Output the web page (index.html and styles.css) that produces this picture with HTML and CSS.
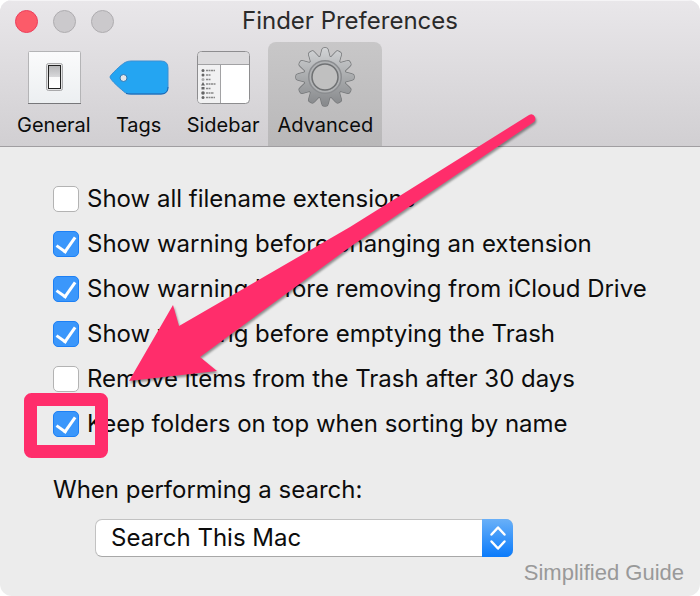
FILE: index.html
```
<!DOCTYPE html>
<html lang="en">
<head>
  <meta charset="UTF-8">
  <meta name="viewport" content="width=device-width, initial-scale=1">
  <title>Finder Preferences</title>
  <link rel="stylesheet" href="styles.css">
</head>
<body>
<div class="window">
  <header class="toolbar">
    <div class="titlebar">
      <div class="lights">
        <span class="light close"></span>
        <span class="light"></span>
        <span class="light"></span>
      </div>
      <h1 class="title">Finder Preferences</h1>
    </div>
    <nav class="tabs">
      <button type="button" class="tab">
        <svg class="icon" width="60" height="60" viewBox="0 0 60 60">
          <defs>
            <linearGradient id="plate" x1="0" y1="0" x2="0" y2="1">
              <stop offset="0" stop-color="#fbfbfc"/>
              <stop offset="1" stop-color="#eceff1"/>
            </linearGradient>
            <linearGradient id="lever" x1="0" y1="0" x2="0" y2="1">
              <stop offset="0" stop-color="#b5b5b7"/>
              <stop offset="0.5" stop-color="#d8d8da"/>
              <stop offset="0.52" stop-color="#fafafa"/>
              <stop offset="1" stop-color="#ffffff"/>
            </linearGradient>
          </defs>
          <rect x="4.500" y="4.500" width="52" height="52" rx="1" fill="url(#plate)" stroke="#b4b4b6"/>
          <path d="M4 56.500h53" stroke="#77777a"/>
          <rect x="22.500" y="16.500" width="16" height="27" rx="2" fill="#e4e4e5" stroke="#a9a9ab"/>
          <rect x="24.500" y="18.500" width="12" height="23" fill="url(#lever)" stroke="#222"/>
        </svg>
        <span class="tab-label">General</span>
      </button>
      <button type="button" class="tab">
        <svg class="icon" width="60" height="60" viewBox="0 0 60 60">
          <path d="M1 30C1 28 13 17 16 15.500Q18.500 14 22 14H52Q59 14 59 21V40Q59 47 52 47H22Q18.500 47 16 45.500C13 43 1 33 1 30Z" fill="#24a5f2" stroke="#3b8fd3"/>
          <path d="M17 46.500Q19 47 22 47H52Q59 47 59 40" fill="none" stroke="#1767b5"/>
          <circle cx="14.500" cy="31" r="3.500" fill="#e2e5e9" stroke="#2c78b5"/>
        </svg>
        <span class="tab-label">Tags</span>
      </button>
      <button type="button" class="tab">
        <svg class="icon" width="60" height="60" viewBox="0 0 60 60">
          <rect x="4.500" y="4.500" width="52" height="52" rx="4" fill="#fff" stroke="#8d8d8f"/>
          <path d="M5 17.500V8.500Q5 5 8.500 5H52.500Q56 5 56 8.500V17.500Z" fill="#dcdbdd"/>
          <path d="M5 18H27V56H8.500Q5 56 5 52.500Z" fill="#f1f1f2"/>
          <path d="M5 17.500H56M27.500 18V56" stroke="#a2a2a4"/>
          <g fill="#666">
            <circle cx="10" cy="23.500" r="1.500"/><circle cx="10" cy="28" r="1.500"/>
            <circle cx="10" cy="32.500" r="1.500" fill="#aaa"/><path d="M8 38.500l2-3.500 2 3.500z"/>
            <rect x="8.500" y="40" width="3" height="2.500"/><circle cx="10" cy="46" r="1.800"/>
            <circle cx="10" cy="50.500" r="1.500"/>
          </g>
          <path d="M13 23.500h9M13 28h5M13 32.500h5M13 37h10M13 41.500h5M13 46h8M13 50.500h9" stroke="#888" stroke-width="1.500" stroke-dasharray="2 0.500"/>
        </svg>
        <span class="tab-label">Sidebar</span>
      </button>
      <button type="button" class="tab active">
        <svg class="icon" width="60" height="60" viewBox="0 0 60 60">
          <defs>
            <linearGradient id="metal" x1="0" y1="0" x2="0" y2="1">
              <stop offset="0" stop-color="#d3d5d7"/>
              <stop offset="0.5" stop-color="#a9abad"/>
              <stop offset="1" stop-color="#85878a"/>
            </linearGradient>
            <path id="tooth" d="M-5 -19L-3 -27Q-2.700 -29 -1 -29H1Q2.700 -29 3 -27L5 -19Z"/>
            <g id="gear" transform="translate(30 30)">
              <circle r="21"/>
              <use href="#tooth"/>
              <use href="#tooth" transform="rotate(30)"/>
              <use href="#tooth" transform="rotate(60)"/>
              <use href="#tooth" transform="rotate(90)"/>
              <use href="#tooth" transform="rotate(120)"/>
              <use href="#tooth" transform="rotate(150)"/>
              <use href="#tooth" transform="rotate(180)"/>
              <use href="#tooth" transform="rotate(210)"/>
              <use href="#tooth" transform="rotate(240)"/>
              <use href="#tooth" transform="rotate(270)"/>
              <use href="#tooth" transform="rotate(300)"/>
              <use href="#tooth" transform="rotate(330)"/>
            </g>
            <mask id="gear-mask"><use href="#gear" fill="#fff"/></mask>
          </defs>
          <use href="#gear" fill="#77797b" stroke="#77797b" stroke-width="1.500"/>
          <rect width="60" height="60" fill="url(#metal)" mask="url(#gear-mask)"/>
          <circle cx="30" cy="30" r="16" fill="none" stroke="#8b8d90" stroke-width="2"/>
          <circle cx="30" cy="30" r="14.500" fill="none" stroke="#b0b2b4" stroke-width="2"/>
          <circle cx="30" cy="30" r="13" fill="#c0c0c0" stroke="#6f7173" stroke-width="1.500"/>
        </svg>
        <span class="tab-label">Advanced</span>
      </button>
    </nav>
  </header>

  <main class="content">
    <div class="options">
      <label class="option"><input type="checkbox" class="check"><span>Show all filename extensions</span></label>
      <label class="option"><input type="checkbox" class="check" checked><span>Show warning before changing an extension</span></label>
      <label class="option"><input type="checkbox" class="check" checked><span>Show warning before removing from iCloud Drive</span></label>
      <label class="option"><input type="checkbox" class="check" checked><span>Show warning before emptying the Trash</span></label>
      <label class="option"><input type="checkbox" class="check"><span>Remove items from the Trash after 30 days</span></label>
      <label class="option"><input type="checkbox" class="check" checked><span>Keep folders on top when sorting by name</span></label>
    </div>
    <div class="search">
      <label for="scope">When performing a search:</label>
      <div class="select-box">
        <select id="scope" class="select">
          <option>Search This Mac</option>
        </select>
        <svg class="stepper" width="31" height="38" viewBox="0 0 31 38">
          <path d="M9.500 15.500L16 8.500L22.500 15.500M9.500 22.500L16 29.500L22.500 22.500" fill="none" stroke="#fff" stroke-width="2.500" stroke-linecap="round" stroke-linejoin="round"/>
        </svg>
      </div>
    </div>
  </main>
  <footer class="credit">Simplified Guide</footer>

  <!-- arrow and frame over the last option -->
  <svg class="marker" width="700" height="596" viewBox="0 0 700 596">
    <path class="arrow" d="M129 381L173 305L179 326L350 227L529 115Q533 113 535 117Q536 120 534 122L350 247L200 357L217 371Z"/>
    <rect class="frame" x="30.500" y="399.500" width="71" height="52" rx="1"/>
  </svg>
</div>
</body>
</html>
```
FILE: styles.css
```
* {
  box-sizing: border-box;
}

body {
  margin: 0;
  background: #fff;
  color: #0c0c0c;
  font-family: Inter, "Liberation Sans", sans-serif;
  font-size: 24px;
  line-height: 30px;
}

.window {
  position: relative;
  min-height: 100vh;
  overflow: hidden;
  border-radius: 12px;
  background: #ececec;
}

.toolbar {
  background: linear-gradient(#e9e7ea, #d1cfd2);
  border-bottom: 1px solid #a09ea1;
  box-shadow: inset 0 1px #f5f4f6;
}

.titlebar {
  display: grid;
  grid-template-columns: 1fr auto 1fr;
  align-items: center;
  height: 42px;
  padding: 0 15px;
}

.lights {
  display: flex;
  gap: 15px;
}

.light {
  width: 23px;
  height: 23px;
  border: 1px solid #aeacaf;
  border-radius: 50%;
  background: #cbc9cc;
}

.light.close {
  border-color: #ec3f5c;
  background: #fc5b69;
}

.title {
  margin: 0;
  font-size: 24px;
  font-weight: 400;
  color: #2a2a2a;
}

.tabs {
  display: flex;
  padding-left: 8px;
}

.tab {
  display: flex;
  flex-direction: column;
  align-items: center;
  height: 104px;
  padding: 5px 9px 0;
  border: 0;
  border-radius: 8px 8px 0 0;
  background: none;
  color: #0c0c0c;
  font: inherit;
  font-size: 20px;
}

.tab.active {
  background: linear-gradient(#c8c7c8, #b9b8b9);
}

.tab-label {
  line-height: 36px;
}

.content {
  padding: 37px 53px 0;
}

.options {
  display: flex;
  flex-direction: column;
  gap: 15px;
}

.option {
  display: flex;
  align-items: center;
  gap: 8px;
  white-space: nowrap;
}

.check {
  appearance: none;
  display: grid;
  place-items: center;
  flex: none;
  width: 26px;
  height: 26px;
  margin: 0;
  border: 1px solid #b3b3b3;
  border-radius: 5px;
  background: #fff;
}

.check:checked {
  border-color: #1d80f5;
  background: #3b97fb;
}

.check:checked::after {
  content: "";
  width: 9px;
  height: 16px;
  margin: 0 1px 4px 0;
  border: solid #fff;
  border-width: 0 3px 3px 0;
  transform: rotate(35deg);
}

.search {
  display: flex;
  flex-direction: column;
  gap: 14px;
  margin-top: 36px;
}

.select-box {
  position: relative;
  width: 418px;
  max-width: 100%;
  margin-left: 42px;
}

.select {
  appearance: none;
  display: block;
  width: 100%;
  height: 38px;
  padding: 0 40px 0 15px;
  border: 1px solid #c2c2c2;
  border-bottom-color: #a8a8a8;
  border-radius: 7px;
  background: #fff;
  color: #0c0c0c;
  font: inherit;
}

.stepper {
  position: absolute;
  top: 0;
  right: 0;
  border-radius: 0 7px 7px 0;
  background: linear-gradient(#69b0f8, #0a7bfb);
  pointer-events: none;
}

.credit {
  padding: 2px 16px 0;
  color: #999;
  font-family: "Liberation Sans", Arial, sans-serif;
  font-size: 22px;
  line-height: 28px;
  text-align: right;
}

.marker {
  position: absolute;
  top: 0;
  left: 0;
  pointer-events: none;
}

.arrow {
  fill: #ff2d6b;
  filter: drop-shadow(1px 2px 1px rgba(0, 0, 0, 0.4));
}

.frame {
  fill: none;
  stroke: #ff2d6b;
  stroke-width: 13px;
  stroke-linejoin: round;
}
```
